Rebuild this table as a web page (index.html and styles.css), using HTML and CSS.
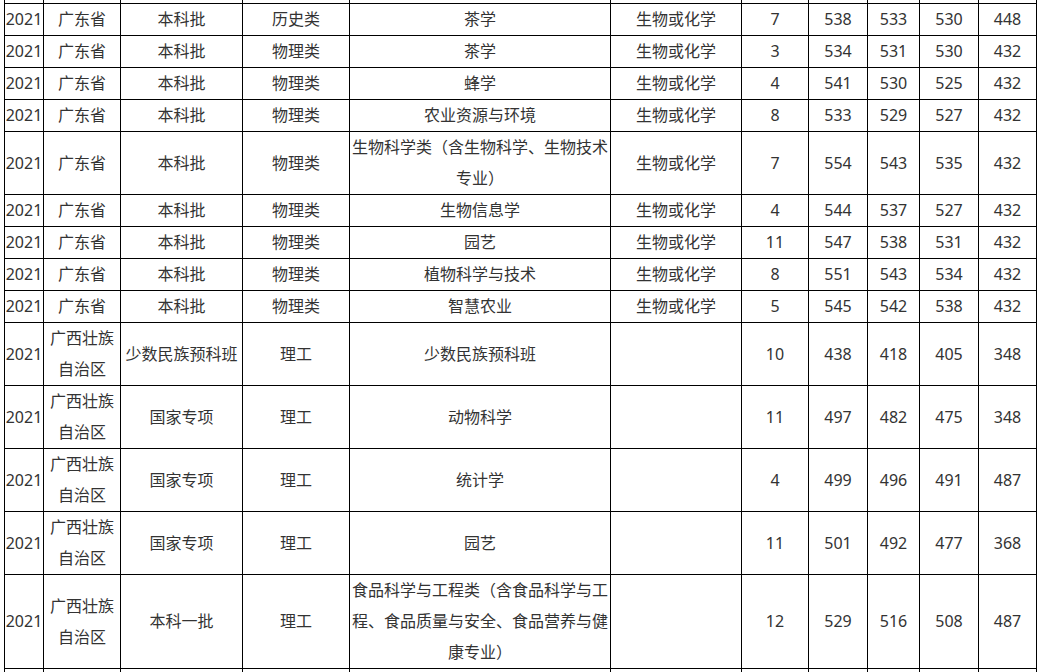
FILE: index.html
```html
<!DOCTYPE html>
<html lang="zh-CN">
<head>
<meta charset="utf-8">
<title>录取分数</title>
<link rel="stylesheet" href="styles.css">
</head>
<body>
<div class="viewport">
<table class="scores">
<colgroup>
<col class="c-year"><col class="c-prov"><col class="c-batch"><col class="c-type"><col class="c-major"><col class="c-subj"><col class="c-num"><col class="c-max"><col class="c-avg"><col class="c-min"><col class="c-line">
</colgroup>
<tbody>
<tr class="cut"><td></td><td></td><td></td><td></td><td></td><td></td><td></td><td></td><td></td><td></td><td></td></tr>
<tr><td>2021</td><td>广东省</td><td>本科批</td><td>历史类</td><td>茶学</td><td>生物或化学</td><td>7</td><td>538</td><td>533</td><td>530</td><td>448</td></tr>
<tr><td>2021</td><td>广东省</td><td>本科批</td><td>物理类</td><td>茶学</td><td>生物或化学</td><td>3</td><td>534</td><td>531</td><td>530</td><td>432</td></tr>
<tr><td>2021</td><td>广东省</td><td>本科批</td><td>物理类</td><td>蜂学</td><td>生物或化学</td><td>4</td><td>541</td><td>530</td><td>525</td><td>432</td></tr>
<tr><td>2021</td><td>广东省</td><td>本科批</td><td>物理类</td><td>农业资源与环境</td><td>生物或化学</td><td>8</td><td>533</td><td>529</td><td>527</td><td>432</td></tr>
<tr><td>2021</td><td>广东省</td><td>本科批</td><td>物理类</td><td>生物科学类（含生物科学、生物技术专业）</td><td>生物或化学</td><td>7</td><td>554</td><td>543</td><td>535</td><td>432</td></tr>
<tr><td>2021</td><td>广东省</td><td>本科批</td><td>物理类</td><td>生物信息学</td><td>生物或化学</td><td>4</td><td>544</td><td>537</td><td>527</td><td>432</td></tr>
<tr><td>2021</td><td>广东省</td><td>本科批</td><td>物理类</td><td>园艺</td><td>生物或化学</td><td>11</td><td>547</td><td>538</td><td>531</td><td>432</td></tr>
<tr><td>2021</td><td>广东省</td><td>本科批</td><td>物理类</td><td>植物科学与技术</td><td>生物或化学</td><td>8</td><td>551</td><td>543</td><td>534</td><td>432</td></tr>
<tr><td>2021</td><td>广东省</td><td>本科批</td><td>物理类</td><td>智慧农业</td><td>生物或化学</td><td>5</td><td>545</td><td>542</td><td>538</td><td>432</td></tr>
<tr><td>2021</td><td>广西壮族自治区</td><td>少数民族预科班</td><td>理工</td><td>少数民族预科班</td><td></td><td>10</td><td>438</td><td>418</td><td>405</td><td>348</td></tr>
<tr><td>2021</td><td>广西壮族自治区</td><td>国家专项</td><td>理工</td><td>动物科学</td><td></td><td>11</td><td>497</td><td>482</td><td>475</td><td>348</td></tr>
<tr><td>2021</td><td>广西壮族自治区</td><td>国家专项</td><td>理工</td><td>统计学</td><td></td><td>4</td><td>499</td><td>496</td><td>491</td><td>487</td></tr>
<tr><td>2021</td><td>广西壮族自治区</td><td>国家专项</td><td>理工</td><td>园艺</td><td></td><td>11</td><td>501</td><td>492</td><td>477</td><td>368</td></tr>
<tr><td>2021</td><td>广西壮族自治区</td><td>本科一批</td><td>理工</td><td>食品科学与工程类（含食品科学与工程、食品质量与安全、食品营养与健康专业）</td><td></td><td>12</td><td>529</td><td>516</td><td>508</td><td>487</td></tr>
<tr class="tail"><td></td><td></td><td></td><td></td><td></td><td></td><td></td><td></td><td></td><td></td><td></td></tr>
</tbody>
</table>
</div>
</body>
</html>
```

FILE: styles.css
```css
html, body {
  margin: 0;
  padding: 0;
  background: #fff;
}

.viewport {
  height: 672px;
  overflow: hidden;
  padding-left: 4px;
}

.scores {
  border-collapse: collapse;
  table-layout: fixed;
  width: 1033px;
  font-family: "Noto Sans", "Noto Sans CJK SC", sans-serif;
  font-size: 16px;
  color: #333;
}

.scores td {
  border: 1px solid #000;
  padding: 0;
  line-height: 31px;
  text-align: center;
  vertical-align: middle;
  overflow: hidden;
}

.scores .cut td {
  border-top: none;
  height: 3px;
  line-height: 0;
  font-size: 0;
}

.scores .tail td {
  height: 31px;
}

.c-year { width: 39px; }
.c-prov { width: 77px; }
.c-batch { width: 122px; }
.c-type { width: 107px; }
.c-major { width: 261px; }
.c-subj { width: 131px; }
.c-num { width: 67px; }
.c-max { width: 59px; }
.c-avg { width: 52px; }
.c-min { width: 59px; }
.c-line { width: 58px; }
```
